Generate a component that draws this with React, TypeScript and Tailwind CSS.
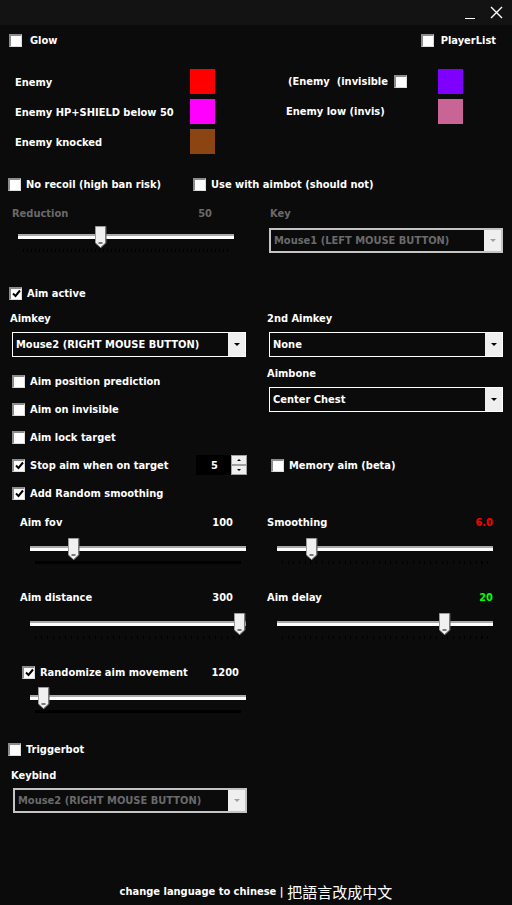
import React from 'react'

const font = { fontFamily: '"DejaVu Sans Condensed", "Liberation Sans", sans-serif' }

function Box({ checked = false }: { checked?: boolean }) {
  return (
    <span className="w-[13px] h-[13px] shrink-0 bg-white border-t-2 border-l-2 border-t-[#8c8c8c] border-l-[#8c8c8c] border-r border-b border-r-[#dcdcdc] border-b-[#dcdcdc] flex items-center justify-center">
      {checked && (
        <svg width="9" height="9" viewBox="0 0 9 9">
          <path d="M1 4.5 L3.5 7 L8 1.5" stroke="#000" strokeWidth="2" fill="none" />
        </svg>
      )}
    </span>
  )
}

function CheckRow({ label, checked, className = '' }: { label: string; checked?: boolean; className?: string }) {
  return (
    <div className={`h-[20px] flex items-center gap-[5px] ${className}`}>
      <Box checked={checked} />
      <span>{label}</span>
    </div>
  )
}

function Select({ value, disabled = false }: { value: string; disabled?: boolean }) {
  return (
    <div
      className={`w-[234px] h-[25px] flex ${
        disabled ? 'border-2 border-[#c4c4c4]' : 'border border-white'
      }`}
    >
      <div className={`flex-1 bg-[#0b0b0b] flex items-center px-[3px] whitespace-nowrap ${disabled ? 'text-[#6a6a6a]' : 'text-white'}`}>
        {value}
      </div>
      <div className="w-[17px] bg-[#efefef] flex items-center justify-center">
        <svg width="6" height="4" viewBox="0 0 6 4">
          <path d="M0 0 H6 L3 3 Z" fill={disabled ? '#a0a0a0' : '#000'} />
        </svg>
      </div>
    </div>
  )
}

function Thumb() {
  return (
    <svg width="12" height="22" viewBox="0 0 12 22">
      <path d="M0.5 0.5 H10.5 V17 L5.5 21.5 L0.5 17 Z" fill="#f0f0f0" stroke="#9a9a9a" />
      <path d="M11 0.5 V17.2 L5.7 22" stroke="#5a5a5a" fill="none" />
      <path d="M3.5 17 H7.5" stroke="#000" />
    </svg>
  )
}

type Ticks = 'solid' | 'dots' | 'six' | 'wide'

function Slider({ offset, ticks }: { offset: number; ticks: Ticks }) {
  return (
    <div className="w-[216px]">
      <div className="relative h-[22px]">
        <div className="absolute left-0 right-0 top-[8px] h-[5px] bg-white border-t-2 border-[#a9a9a9]" />
        <div className="absolute top-0" style={{ left: offset }}>
          <Thumb />
        </div>
      </div>
      {ticks === 'solid' && <div className="mx-[5px] mt-[1px] h-[3px] bg-black" />}
      {ticks === 'dots' && (
        <div className="mx-[5px] mt-[1px] h-[3px] bg-[repeating-linear-gradient(90deg,#000_0px,#000_1px,transparent_1px,transparent_4px)]" />
      )}
      {ticks === 'six' && (
        <div className="mx-[5px] mt-[1px] h-[3px] bg-[repeating-linear-gradient(90deg,#000_0px,#000_1px,transparent_1px,transparent_6px)]" />
      )}
      {ticks === 'wide' && (
        <div className="mx-[5px] mt-[1px] h-[3px] bg-[repeating-linear-gradient(90deg,#000_0px,#000_1px,transparent_1px,transparent_5.7px)]" />
      )}
    </div>
  )
}

function Swatch({ color }: { color: string }) {
  return <div className={`w-[25px] h-[25px] ${color}`} />
}

export default function App() {
  return (
    <div className="w-[512px] h-[905px] bg-[#0b0b0b] text-white font-bold text-[11px] leading-none flex flex-col" style={font}>
      {/* title bar */}
      <div className="h-[25px] bg-[#131313] flex items-center justify-end gap-[14px] pr-[9px]">
        <svg width="12" height="12" viewBox="0 0 12 12">
          <path d="M1 11.5 H11" stroke="#fff" strokeWidth="1" />
        </svg>
        <svg width="13" height="13" viewBox="0 0 13 13">
          <path d="M1 1 L12 12 M12 1 L1 12" stroke="#fff" strokeWidth="1.4" />
        </svg>
      </div>

      {/* glow */}
      <div className="mt-[5px] h-[20px] flex items-center justify-between pl-[9px] pr-[16px]">
        <div className="flex items-center gap-[8px]">
          <Box />
          <span>Glow</span>
        </div>
        <div className="flex items-center gap-[7px]">
          <Box />
          <span>PlayerList</span>
        </div>
      </div>

      {/* colours */}
      <div className="mt-[19px] grid grid-cols-2">
        <div className="pl-[15px] flex flex-col gap-[5px]">
          {[
            ['Enemy', 'bg-[#ff0000]'],
            ['Enemy HP+SHIELD below 50', 'bg-[#ff00ff]'],
            ['Enemy knocked', 'bg-[#8b4513]'],
          ].map(([label, c]) => (
            <div key={label} className="h-[25px] flex items-center">
              <span className="w-[175px] pt-[1px]">{label}</span>
              <Swatch color={c} />
            </div>
          ))}
        </div>
        <div className="pl-[30px] flex flex-col gap-[5px]">
          <div className="h-[25px] flex items-center">
            <span className="w-[152px] flex items-center">
              <span className="ml-[2px] mr-[6px] whitespace-pre">(Enemy  (invisible</span>
              <Box />
            </span>
            <Swatch color="bg-[#8000ff]" />
          </div>
          <div className="h-[25px] flex items-center">
            <span className="w-[152px]">Enemy low (invis)</span>
            <Swatch color="bg-[#c86496]" />
          </div>
        </div>
      </div>

      {/* no recoil */}
      <div className="mt-[20px] h-[20px] flex items-center">
        <CheckRow label="No recoil (high ban risk)" className="pl-[8px] w-[193px]" />
        <CheckRow label="Use with aimbot (should not)" />
      </div>

      {/* reduction / key */}
      <div className="mt-[12px] grid grid-cols-2">
        <div className="pl-[12px]">
          <div className="h-[14px] flex items-center justify-between w-[200px] text-[#6a6a6a]">
            <span>Reduction</span>
            <span>50</span>
          </div>
          <div className="mt-[6px] pl-[6px]">
            <Slider offset={77} ticks="dots" />
          </div>
        </div>
        <div className="pl-[13px]">
          <div className="h-[14px] flex items-center pl-[1px] text-[#6a6a6a]">Key</div>
          <div className="mt-[8px]">
            <Select value="Mouse1 (LEFT MOUSE BUTTON)" disabled />
          </div>
        </div>
      </div>

      {/* aim active */}
      <CheckRow label="Aim active" checked className="mt-[30px] pl-[9px]" />

      {/* aimkey section */}
      <div className="mt-[8px] grid grid-cols-2">
        <div className="pl-[10px]">
          <div className="h-[14px] flex items-center">Aimkey</div>
          <div className="mt-[7px] pl-[2px]">
            <Select value="Mouse2 (RIGHT MOUSE BUTTON)" />
          </div>
          <div className="mt-[14px] pl-[2px] flex flex-col gap-[8px]">
            <CheckRow label="Aim position prediction" />
            <CheckRow label="Aim on invisible" />
            <CheckRow label="Aim lock target" />
            <div className="h-[20px] flex items-center">
              <CheckRow label="Stop aim when on target" checked className="w-[184px]" />
              <div className="w-[35px] h-[20px] bg-black flex items-center justify-end pr-[13px]">5</div>
              <div className="w-[16px] h-[20px] flex flex-col">
                <div className="h-[10px] bg-[#efefef] border border-[#a0a0a0] flex items-center justify-center">
                  <svg width="4" height="2" viewBox="0 0 4 2"><path d="M0 2 H4 L2 0 Z" fill="#000" /></svg>
                </div>
                <div className="h-[10px] bg-[#efefef] border border-[#a0a0a0] flex items-center justify-center">
                  <svg width="4" height="2" viewBox="0 0 4 2"><path d="M0 0 H4 L2 2 Z" fill="#000" /></svg>
                </div>
              </div>
            </div>
            <CheckRow label="Add Random smoothing" checked />
          </div>
        </div>
        <div className="pl-[11px]">
          <div className="h-[14px] flex items-center">2nd Aimkey</div>
          <div className="mt-[7px] pl-[2px]">
            <Select value="None" />
          </div>
          <div className="mt-[9px] h-[14px] flex items-center">Aimbone</div>
          <div className="mt-[7px] pl-[2px]">
            <Select value="Center Chest" />
          </div>
          <CheckRow label="Memory aim (beta)" className="mt-[43px] pl-[4px]" />
        </div>
      </div>

      {/* sliders */}
      <div className="mt-[12px] grid grid-cols-2">
        <div className="pl-[20px]">
          <div className="h-[14px] w-[213px] flex items-center justify-between">
            <span>Aim fov</span>
            <span>100</span>
          </div>
          <div className="mt-[9px] pl-[10px]">
            <Slider offset={38} ticks="solid" />
          </div>
          <div className="mt-[26px] h-[14px] w-[213px] flex items-center justify-between">
            <span>Aim distance</span>
            <span>300</span>
          </div>
          <div className="mt-[9px] pl-[10px]">
            <Slider offset={204} ticks="six" />
          </div>
          <div className="mt-[26px] h-[14px] w-[219px] flex items-center justify-between pl-[2px]">
            <span className="flex items-center gap-[5px]">
              <Box checked />
              Randomize aim movement
            </span>
            <span>1200</span>
          </div>
          <div className="mt-[8px] pl-[10px]">
            <Slider offset={8} ticks="solid" />
          </div>
        </div>
        <div className="pl-[11px]">
          <div className="h-[14px] w-[226px] flex items-center justify-between">
            <span>Smoothing</span>
            <span className="text-[#ff0000]">6.0</span>
          </div>
          <div className="mt-[9px] pl-[10px]">
            <Slider offset={29} ticks="wide" />
          </div>
          <div className="mt-[26px] h-[14px] w-[226px] flex items-center justify-between">
            <span>Aim delay</span>
            <span className="text-[#00ff00]">20</span>
          </div>
          <div className="mt-[9px] pl-[10px]">
            <Slider offset={162} ticks="wide" />
          </div>
        </div>
      </div>

      {/* triggerbot */}
      <CheckRow label="Triggerbot" className="mt-[26px] pl-[8px]" />
      <div className="mt-[9px] pl-[11px] h-[14px] flex items-center">Keybind</div>
      <div className="mt-[6px] pl-[13px]">
        <Select value="Mouse2 (RIGHT MOUSE BUTTON)" disabled />
      </div>

      {/* footer */}
      <div className="mt-auto mb-[6px] h-[16px] flex items-center justify-center gap-[4px]">
        <span>change language to chinese |</span>
        <span className="font-normal text-[15px]" style={{ fontFamily: '"Noto Sans CJK TC", sans-serif' }}>
          把語言改成中文
        </span>
      </div>
    </div>
  )
}
